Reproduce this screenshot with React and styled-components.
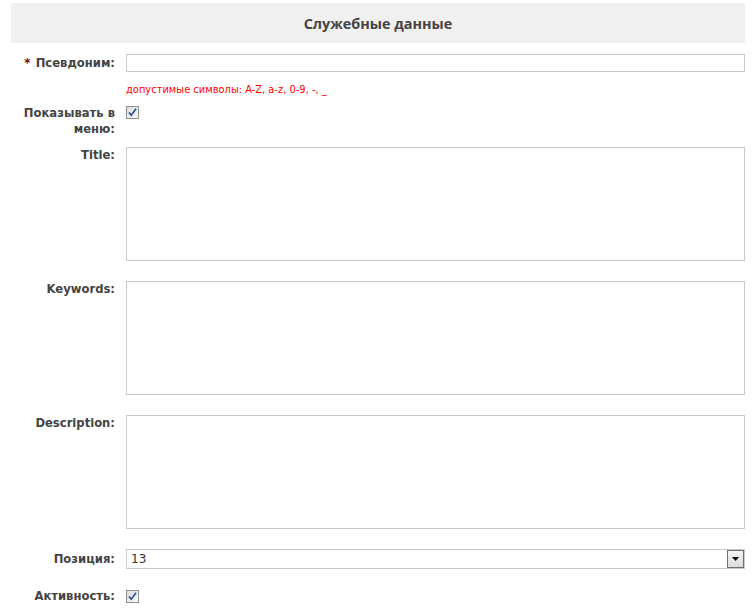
import React from "react";
import styled, { createGlobalStyle } from "styled-components";

const Global = createGlobalStyle`
  html, body { margin: 0; padding: 0; background: #fff; }
  body { font-family: "DejaVu Sans", Verdana, sans-serif; color: #444; }
`;

const Wrap = styled.div`
  padding: 3px 7px 0 11px;
`;

const Header = styled.div`
  height: 40px;
  background: #f0f0f0;
  display: flex;
  align-items: center;
  justify-content: center;
  font-family: "Open Sans", "DejaVu Sans", sans-serif;
  font-weight: 700;
  font-size: 14.4px;
  color: #444;
`;

const Form = styled.div`
  display: grid;
  grid-template-columns: 104px 1fr;
  column-gap: 11px;
  padding-top: 11px;
`;

const Label = styled.div`
  font-weight: 700;
  font-size: 11.6px;
  line-height: ${(p) => p.$lh || 16}px;
  text-align: right;
  color: #444;
  margin-top: ${(p) => p.$mt || 0}px;
`;

const Req = styled.span`
  color: #8b0000;
  font-size: 12px;
  margin-right: 5px;
  font-weight: 700;
`;

const Field = styled.div`
  margin-top: ${(p) => p.$mt || 0}px;
  display: flex;
  align-items: flex-start;
`;

const TextInput = styled.div`
  box-sizing: border-box;
  width: 100%;
  height: 18px;
  border: 1px solid #c8c8c8;
  background: #fff;
`;

const Hint = styled.div`
  grid-column: 2;
  margin-top: 11px;
  font-size: 11px;
  line-height: 14px;
  color: #f00;
  font-family: "DejaVu Sans Condensed", "DejaVu Sans", sans-serif;
`;

const Area = styled.div`
  box-sizing: border-box;
  width: 100%;
  height: 114px;
  border: 1px solid #c8c8c8;
  background: #fff;
`;

const Select = styled.div`
  box-sizing: border-box;
  width: 100%;
  height: 20px;
  border: 1px solid #c8c8c8;
  background: #fff;
  display: flex;
  align-items: center;
  justify-content: space-between;
  padding: 0 0 0 4px;
  font-size: 12px;
  color: #333;
  font-family: "DejaVu Sans", sans-serif;
`;

const SelectBtn = styled.div`
  box-sizing: border-box;
  width: 17px;
  height: 18px;
  border: 1px solid #6e6e6e;
  background: linear-gradient(#f4f4f4, #dcdcdc);
  display: flex;
  align-items: center;
  justify-content: center;
`;

const Check = styled.div`
  box-sizing: border-box;
  width: 13px;
  height: 13px;
  border: 1px solid #8e8f8f;
  background: linear-gradient(135deg, #dcdcdc, #fafafa);
  display: flex;
  align-items: center;
  justify-content: center;
`;

const CheckBox = () => (
  <Check>
    <svg width="9" height="9" viewBox="0 0 9 9">
      <path d="M1 4.5 L3.3 7.2 L8 0.8" fill="none" stroke="#2c4e9c" strokeWidth="1.7" />
    </svg>
  </Check>
);

export default function App() {
  return (
    <>
      <Global />
      <Wrap>
        <Header>Служебные данные</Header>
        <Form>
          <Label $lh={18}>
            <Req>*</Req>Псевдоним:
          </Label>
          <Field>
            <TextInput />
          </Field>

          <Hint>допустимые символы: A-Z, a-z, 0-9, -, _</Hint>

          <Label $mt={8}>
            Показывать в<br />меню:
          </Label>
          <Field $mt={9}>
            <CheckBox />
          </Field>

          <Label $mt={10}>Title:</Label>
          <Field $mt={10}>
            <Area />
          </Field>

          <Label $mt={20}>Keywords:</Label>
          <Field $mt={20}>
            <Area />
          </Field>

          <Label $mt={20}>Description:</Label>
          <Field $mt={20}>
            <Area />
          </Field>

          <Label $mt={20} $lh={20}>Позиция:</Label>
          <Field $mt={20}>
            <Select>
              <span>13</span>
              <SelectBtn>
                <svg width="7" height="4" viewBox="0 0 7 4">
                  <path d="M0 0 H7 L3.5 4 Z" fill="#000" />
                </svg>
              </SelectBtn>
            </Select>
          </Field>

          <Label $mt={18} $lh={18}>Активность:</Label>
          <Field $mt={21}>
            <CheckBox />
          </Field>
        </Form>
      </Wrap>
    </>
  );
}
